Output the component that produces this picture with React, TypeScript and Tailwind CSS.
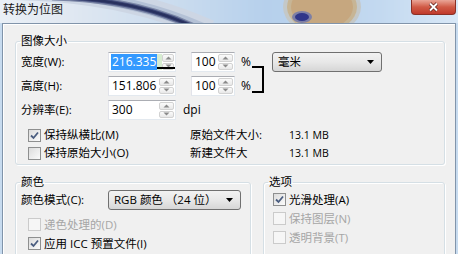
import React from "react";

const FONT = { fontFamily: '"Open Sans","Noto Sans CJK SC",sans-serif' };

const STOPS: [number, number[]][] = [
  [0, [233, 239, 246]],
  [60, [226, 233, 242]],
  [190, [199, 218, 238]],
  [265, [182, 208, 236]],
  [380, [195, 217, 240]],
  [458, [217, 232, 247]],
];

function colorAt(x: number) {
  for (let i = 0; i < STOPS.length - 1; i++) {
    const [x0, c0] = STOPS[i];
    const [x1, c1] = STOPS[i + 1];
    if (x >= x0 && x <= x1) {
      const t = (x - x0) / (x1 - x0);
      const c = c0.map((v, k) => Math.round(v + (c1[k] - v) * t));
      return `rgb(${c[0]},${c[1]},${c[2]})`;
    }
  }
  return "rgb(217,232,247)";
}

const STRIPS = Array.from({ length: 230 }, (_, i) => i * 2);

function TitleBackdrop() {
  const arc = "M52 -3 Q 135 -1 194 27";
  return (
    <svg
      className="absolute left-0 top-0"
      width="458"
      height="23"
      viewBox="0 0 458 23"
    >
      {STRIPS.map((x) => (
        <rect key={x} x={x} y="0" width="2.5" height="23" fill={colorAt(x)} />
      ))}
      <path d="M15 -10 Q 125 -8 210 30" stroke="#cdd6e4" strokeWidth="20" fill="none" />
      <path d="M25 -8 Q 128 -5 204 29" stroke="#b4c1d6" strokeWidth="11" fill="none" />
      <path d={arc} stroke="#7b86a6" strokeWidth="7" fill="none" />
      <path d={arc} stroke="#414b7a" strokeWidth="4.5" fill="none" />
      <path d={arc} stroke="#28305e" strokeWidth="2.5" fill="none" />
      <ellipse cx="322" cy="7" rx="39" ry="28" fill="#c4c8c8" />
      <ellipse cx="322" cy="7" rx="35" ry="25" fill="#c7b595" />
      <ellipse cx="322" cy="7" rx="31" ry="22" fill="#c6a77f" />
      <ellipse cx="302" cy="17" rx="10" ry="6" fill="#7d7fa6" />
      <ellipse cx="302" cy="17" rx="7" ry="4" fill="#30368a" />
    </svg>
  );
}

function Spinner() {
  return (
    <div className="flex flex-col w-[16px] h-full py-[1px] pr-[1px] gap-[1px]">
      {[0, 1].map((i) => (
        <div
          key={i}
          className="flex-1 flex items-center justify-center rounded-[2px] border border-[#d2d2d2] bg-gradient-to-b from-[#fbfbfb] to-[#e8e8e8]"
        >
          <svg width="7" height="4" viewBox="0 0 7 4">
            {i === 0 ? (
              <path d="M0.5 3.5 L3.5 0.5 L6.5 3.5 Z" fill="#8a8a8a" />
            ) : (
              <path d="M0.5 0.5 L3.5 3.5 L6.5 0.5 Z" fill="#8a8a8a" />
            )}
          </svg>
        </div>
      ))}
    </div>
  );
}

function NumBox({
  value,
  w,
  selected,
}: {
  value: string;
  w: string;
  selected?: boolean;
}) {
  return (
    <div
      className={`${w} h-[20px] flex items-stretch bg-white border border-[#abadb3] border-l-[#e2e3ea] border-r-[#e3e9ef] border-b-[#e3e9ef]`}
    >
      <div className="flex-1 flex items-center pl-[2px]">
        <span
          className={
            selected
              ? "bg-[#3399ff] text-white leading-[16px] px-[1px] text-[12px]"
              : "text-black leading-[16px] px-[1px] text-[12px]"
          }
        >
          {value}
        </span>
        {selected && <span className="w-[5px] h-[16px] bg-[#d6ecd0]" />}
      </div>
      <Spinner />
    </div>
  );
}

function Check({
  checked,
  disabled,
  label,
}: {
  checked?: boolean;
  disabled?: boolean;
  label: string;
}) {
  return (
    <div className="flex items-center">
      <div
        className={
          disabled
            ? "w-[13px] h-[13px] border border-[#cbcbcb] bg-[#f6f6f6] flex items-center justify-center"
            : "w-[13px] h-[13px] border border-[#8e8f8f] bg-gradient-to-br from-[#dcdcdc] to-[#fbfbfb] flex items-center justify-center"
        }
      >
        {checked && (
          <svg width="9" height="9" viewBox="0 0 9 9">
            <path
              d="M1 4.5 L3.5 7 L8 1.5"
              fill="none"
              stroke="#4a5d80"
              strokeWidth="1.8"
            />
          </svg>
        )}
      </div>
      <span
        className={`ml-[3px] text-[11.5px] leading-[16px] ${
          disabled ? "text-[#a6a6a6]" : "text-black"
        }`}
      >
        {label}
      </span>
    </div>
  );
}

function Combo({ text, w }: { text: string; w: string }) {
  return (
    <div
      className={`${w} h-[20px] flex items-center justify-between rounded-[3px] border border-[#707070] bg-gradient-to-b from-[#f2f2f2] via-[#e8e8e8] to-[#d6d6d6] pl-[5px] pr-[7px]`}
    >
      <span className="text-[11.5px] leading-[16px] text-black whitespace-pre">
        {text}
      </span>
      <svg width="7" height="4" viewBox="0 0 7 4">
        <path d="M0 0 L7 0 L3.5 4 Z" fill="#000" />
      </svg>
    </div>
  );
}

function Group({
  title,
  className,
  children,
}: {
  title: string;
  className: string;
  children: React.ReactNode;
}) {
  return (
    <fieldset
      className={`${className} border border-[#d5dfe5] rounded-[3px] shadow-[inset_1px_1px_0_#ffffff,1px_1px_0_#ffffff]`}
    >
      <legend className="ml-[4px] px-[1px] text-[11.5px] leading-[14px] text-black">
        {title}
      </legend>
      {children}
    </fieldset>
  );
}

export default function App() {
  return (
    <div
      className="w-[458px] h-[254px] overflow-hidden bg-[#c7dbef] flex flex-col"
      style={FONT}
    >
      {/* title bar */}
      <div className="relative h-[23px] shrink-0 bg-[#d0e1f3]">
        <TitleBackdrop />
        <div className="relative pl-[3px] pt-[3px] text-[12px] leading-[14px] text-[#1a1a1a]">
          转换为位图
        </div>
        <div className="absolute right-[2px] top-0 w-[45px] h-[15px] rounded-b-[4px] border border-t-0 border-[#8a3026] bg-gradient-to-b from-[#e9a597] via-[#d05a46] to-[#c0392b] flex items-center justify-center">
          <svg width="11" height="10" viewBox="0 0 11 10">
            <path
              d="M2 1.5 L9 8.5 M9 1.5 L2 8.5"
              stroke="#5a1a14"
              strokeWidth="3.4"
            />
            <path
              d="M2 1.5 L9 8.5 M9 1.5 L2 8.5"
              stroke="#ffffff"
              strokeWidth="2"
            />
          </svg>
        </div>
      </div>

      {/* dialog body */}
      <div className="relative mx-[2px] flex-1 border border-b-0 border-[#8194aa] bg-[#f0f0f0] shadow-[inset_1px_1px_0_#ffffff]">
        <div className="pt-[10px] pl-[12px] flex flex-col">
          <Group title="图像大小" className="relative w-[430px] h-[131px]">
            <div className="pl-[5px] pt-[4px] flex flex-col gap-[4px]">
              <div className="flex items-center h-[20px]">
                <span className="w-[87px] text-[11.5px] leading-[16px]">
                  宽度(W):
                </span>
                <NumBox value="216.335" w="w-[68px]" selected />
                <div className="ml-[15px]">
                  <NumBox value="100" w="w-[44px]" />
                </div>
                <span className="ml-[6px] text-[12px] leading-[16px]">%</span>
                <div className="ml-[21px]">
                  <Combo text="毫米" w="w-[110px]" />
                </div>
              </div>
              <div className="flex items-center h-[20px]">
                <span className="w-[87px] text-[11.5px] leading-[16px]">
                  高度(H):
                </span>
                <NumBox value="151.806" w="w-[68px]" />
                <div className="ml-[15px]">
                  <NumBox value="100" w="w-[44px]" />
                </div>
                <span className="ml-[6px] text-[12px] leading-[16px]">%</span>
              </div>
              <div className="flex items-center h-[20px]">
                <span className="w-[87px] text-[11.5px] leading-[16px]">
                  分辨率(E):
                </span>
                <NumBox value="300" w="w-[68px]" />
                <span className="ml-[7px] text-[12px] leading-[16px]">dpi</span>
              </div>
            </div>
            <div className="pl-[12px] mt-[6px] flex flex-col">
              <div className="flex items-center h-[18px]">
                <div className="w-[162px]">
                  <Check checked label="保持纵横比(M)" />
                </div>
                <span className="w-[99px] text-[11.5px] leading-[16px]">
                  原始文件大小:
                </span>
                <span className="text-[10.5px] leading-[14px]">13.1 MB</span>
              </div>
              <div className="flex items-center h-[18px]">
                <div className="w-[162px]">
                  <Check label="保持原始大小(O)" />
                </div>
                <span className="w-[99px] text-[11.5px] leading-[16px]">
                  新建文件大
                </span>
                <span className="text-[10.5px] leading-[14px]">13.1 MB</span>
              </div>
            </div>
            {/* link line across first spinner */}
            <div className="absolute left-[141px] top-[19px] w-[18px] h-[2px] bg-black" />
            {/* bracket */}
            <div className="absolute left-[236px] top-[18px] w-[12px] h-[27px] border-2 border-l-0 border-black" />
          </Group>

          <div className="flex mt-[10px]">
            <Group title="颜色" className="w-[236px] h-[90px]">
              <div className="pl-[5px] pt-[1px] flex items-center h-[21px]">
                <span className="w-[87px] text-[11.5px] leading-[16px]">
                  颜色模式(C):
                </span>
                <Combo text="RGB 颜色 （24 位）" w="w-[133px]" />
              </div>
              <div className="pl-[12px] mt-[5px] flex flex-col">
                <div className="h-[19px] flex items-center">
                  <Check disabled label="递色处理的(D)" />
                </div>
                <div className="h-[19px] flex items-center">
                  <Check checked label="应用 ICC 预置文件(I)" />
                </div>
              </div>
            </Group>
            <Group title="选项" className="ml-[12px] w-[182px] h-[90px]">
              <div className="pl-[9px] pt-[1px] flex flex-col">
                <div className="h-[19px] flex items-center">
                  <Check checked label="光滑处理(A)" />
                </div>
                <div className="h-[19px] flex items-center">
                  <Check disabled label="保持图层(N)" />
                </div>
                <div className="h-[19px] flex items-center">
                  <Check disabled label="透明背景(T)" />
                </div>
              </div>
            </Group>
          </div>
        </div>
      </div>
    </div>
  );
}
